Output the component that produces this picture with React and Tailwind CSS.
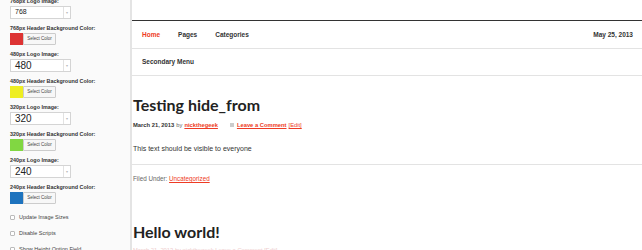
import React from 'react';

const sans = { fontFamily: '"Liberation Sans", Arial, sans-serif' };
const lato = { fontFamily: 'Lato, "Liberation Sans", sans-serif' };

const sizes = [
  { px: '768', color: 'bg-[#dd3333]', big: false },
  { px: '480', color: 'bg-[#eeee22]', big: true },
  { px: '320', color: 'bg-[#81d742]', big: true },
  { px: '240', color: 'bg-[#1e73be]', big: true },
];

const LogoSelect = ({ value, big }) => (
  <div className="flex h-[13px] w-[61px] items-stretch border border-[#d4d4d4] bg-white">
    <div className={`flex flex-1 items-center pl-[4px] text-[#222] ${big ? 'text-[10px]' : 'text-[7px]'}`}>{value}</div>
    <div className="flex w-[7px] items-center justify-center border-l border-[#e2e2e2]">
      <span className="text-[4px] leading-none text-[#bbb]">▾</span>
    </div>
  </div>
);

const ColorPick = ({ color }) => (
  <div className="flex h-[12px] items-stretch">
    <div className={`w-[13px] ${color}`}></div>
    <div className="flex w-[33px] items-center justify-center rounded-r-[1px] border border-[#ccc] bg-[#f7f7f7] text-[4.5px] text-[#444]">
      Select Color
    </div>
  </div>
);

const Check = ({ label }) => (
  <div className="flex h-[8px] items-center gap-[4px] text-[5.5px] text-[#444]">
    <div className="h-[5px] w-[5px] rounded-[1px] border border-[#bbb] bg-white"></div>
    <span>{label}</span>
  </div>
);

const Sidebar = () => (
  <div className="w-[132px] shrink-0 border-r-2 border-[#e4e4e4] bg-[#fafafa] pl-[10px]" style={sans}>
    <div className="-mt-[3px] flex flex-col">
      {sizes.map((s, i) => (
        <div key={s.px} className={`flex flex-col ${i > 0 ? 'mt-[5px]' : ''}`}>
          <div className="h-[8px] text-[5.4px] font-bold leading-[8px] text-[#333]">{s.px}px Logo Image:</div>
          <div className="mt-[1px]">
            <LogoSelect value={s.px} big={s.big} />
          </div>
          <div className="mt-[5px] h-[8px] text-[5.4px] font-bold leading-[8px] text-[#333]">
            {s.px}px Header Background Color:
          </div>
          <div className="mt-[1px]">
            <ColorPick color={s.color} />
          </div>
        </div>
      ))}
      <div className="mt-[9px] flex flex-col gap-[8px]">
        <Check label="Update Image Sizes" />
        <Check label="Disable Scripts" />
        <Check label="Show Height Option Field" />
      </div>
    </div>
  </div>
);

const Content = () => (
  <div className="flex-1 bg-white" style={sans}>
    <div className="h-[20px]"></div>
    <div className="flex h-[28px] items-center justify-between border-t border-[#333] pl-[10px] pr-[9px] text-[6.5px] font-bold text-[#333]">
      <div className="flex gap-[18px]">
        <span className="text-[#ee3b24]">Home</span>
        <span>Pages</span>
        <span>Categories</span>
      </div>
      <span>May 25, 2013</span>
    </div>
    <div className="flex h-[28px] items-center border-y border-[#e3e3e3] pl-[10px] text-[6.5px] font-bold text-[#333]">
      Secondary Menu
    </div>
    <div className="pl-[1px]">
      <h1 className="mt-[19px] h-[20px] text-[16px] font-bold leading-[20px] text-[#222]" style={lato}>
        Testing hide_from
      </h1>
      <div className="mt-[6px] flex items-center text-[5.8px] text-[#666]">
        <span className="font-bold text-[#333]">March 21, 2013</span>
        <span className="ml-[2px]">by</span>
        <span className="ml-[2px] font-bold text-[#ee3b24] underline">nickthegeek</span>
        <span className="ml-[12px] mr-[3px] inline-block h-[4px] w-[4px] bg-[#ccc]"></span>
        <span className="font-bold text-[#ee3b24] underline">Leave a Comment</span>
        <span className="ml-[2px] text-[#ee3b24] underline">[Edit]</span>
      </div>
      <p className="mt-[14px] text-[7px] text-[#333]">This text should be visible to everyone</p>
    </div>
    <div className="mt-[10px] border-t border-[#e3e3e3] pl-[1px] pt-[9px] text-[6.3px] text-[#666]">
      Filed Under: <span className="text-[#ee3b24] underline">Uncategorized</span>
    </div>
    <h1 className="mt-[38px] pl-[1px] text-[16px] font-bold leading-[20px] text-[#222]" style={lato}>
      Hello world!
    </h1>
    <div className="mt-[4px] pl-[1px] text-[5.8px] text-[#ecc]">March 21, 2013 by nickthegeek Leave a Comment [Edit]</div>
  </div>
);

export default function App() {
  return (
    <div className="flex h-[250px] w-[642px] overflow-hidden bg-white">
      <Sidebar />
      <Content />
    </div>
  );
}
